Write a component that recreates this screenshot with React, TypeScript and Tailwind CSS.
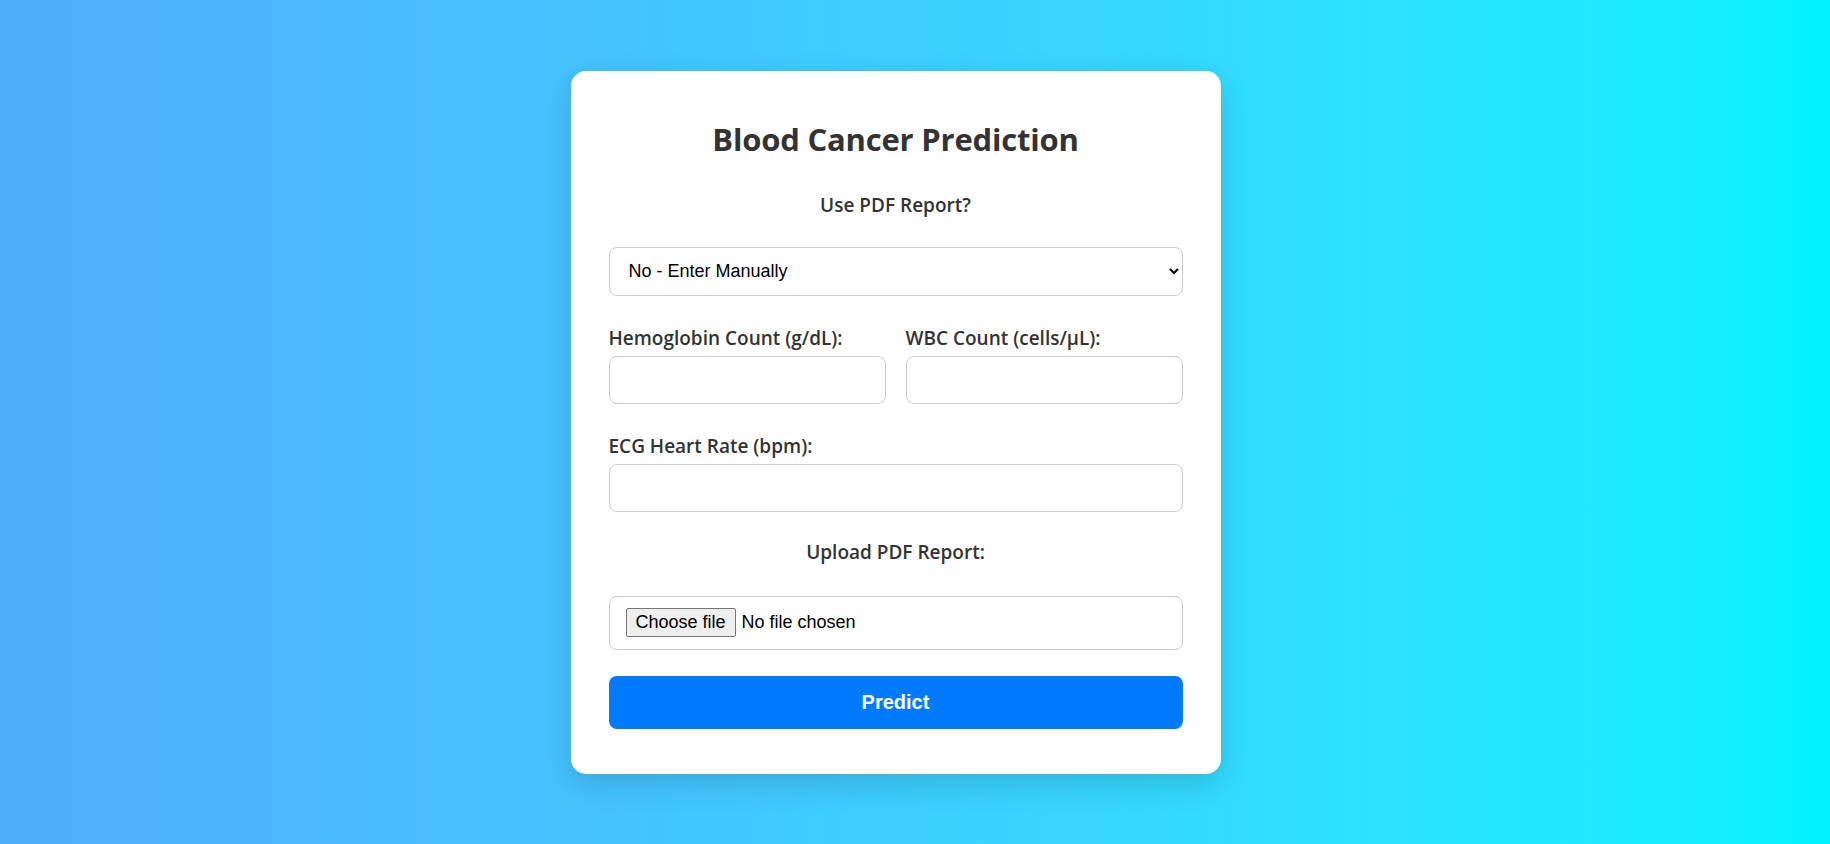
import React, { useState } from 'react';

export default function App() {
  const [usePdf, setUsePdf] = useState('no');
  const [fileName, setFileName] = useState('');

  return (
    <div className="min-h-screen w-full flex items-center justify-center pr-[39px] bg-gradient-to-r from-[#4facfe] to-[#00f2fe]">
      <div className="w-[650px] bg-white rounded-[15px] shadow-[0_10px_30px_rgba(0,0,0,0.15)] px-[38px] pt-[48px] pb-[45px] text-[#333] font-['Open_Sans',sans-serif]">
        {/* Title */}
        <h2 className="text-center text-[31px] leading-[40px] font-bold tracking-[-0.2px]">Blood Cancer Prediction</h2>

        {/* PDF toggle */}
        <label className="block text-center text-[19px] leading-[24px] font-semibold mt-[34px]">Use PDF Report?</label>
        <select
          value={usePdf}
          onChange={e => setUsePdf(e.target.value)}
          className="mt-[30px] w-full h-[49px] px-[15px] border border-[#ccc] rounded-[8px] bg-white text-black text-[18px] font-['Liberation_Sans',Arial,sans-serif]"
        >
          <option value="no">No - Enter Manually</option>
          <option value="yes">Yes - Upload PDF</option>
        </select>

        {/* Manual inputs */}
        <div className="mt-[30px] grid grid-cols-2 gap-[20px]">
          <div>
            <label className="block text-[19px] leading-[24px] font-semibold">Hemoglobin Count (g/dL):</label>
            <input type="text" className="mt-[6px] w-full h-[48px] px-[12px] border border-[#ccc] rounded-[8px]" />
          </div>
          <div>
            <label className="block text-[19px] leading-[24px] font-semibold">WBC Count (cells/µL):</label>
            <input type="text" className="mt-[6px] w-full h-[48px] px-[12px] border border-[#ccc] rounded-[8px]" />
          </div>
        </div>

        <div className="mt-[30px]">
          <label className="block text-[19px] leading-[24px] font-semibold">ECG Heart Rate (bpm):</label>
          <input type="text" className="mt-[6px] w-full h-[48px] px-[12px] border border-[#ccc] rounded-[8px]" />
        </div>

        {/* Upload */}
        <label className="block text-center text-[19px] leading-[24px] font-semibold mt-[28px]">Upload PDF Report:</label>
        <label className="mt-[32px] w-full h-[54px] px-[16px] border border-[#ccc] rounded-[8px] flex items-center gap-[6px] text-[18px] text-black font-['Liberation_Sans',Arial,sans-serif] cursor-pointer">
          <input
            type="file"
            accept=".pdf"
            className="hidden"
            onChange={e => setFileName(e.target.files?.[0]?.name ?? '')}
          />
          <span className="h-[29px] px-[9px] flex items-center border border-[#767676] rounded-[2px] bg-[#efefef]">Choose file</span>
          <span>{fileName || 'No file chosen'}</span>
        </label>

        <button className="mt-[26px] w-full h-[53px] rounded-[8px] bg-[#007bff] text-white text-[20px] font-bold font-['Liberation_Sans',Arial,sans-serif]">
          Predict
        </button>
      </div>
    </div>
  );
}
